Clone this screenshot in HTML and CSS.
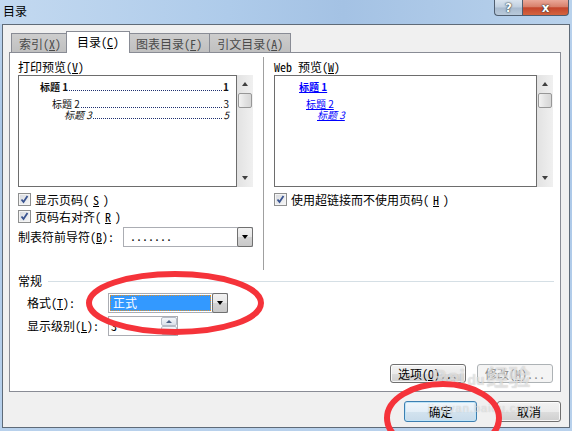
FILE: index.html
```html
<!DOCTYPE html>
<html lang="zh-CN">
<head>
  <meta charset="UTF-8">
  <title>目录</title>
  <link rel="stylesheet" href="styles.css">
</head>
<body>
  <div class="titlebar">
    <span class="title">目录</span>
    <div class="caption-buttons">
      <div class="cap-btn help">?</div>
      <div class="cap-btn close">x</div>
    </div>
  </div>

  <div class="window">
    <div class="tabs">
      <div class="tab">索引(<u>X</u>)</div>
      <div class="tab active">目录(<u>C</u>)</div>
      <div class="tab">图表目录(<u>F</u>)</div>
      <div class="tab">引文目录(<u>A</u>)</div>
    </div>

    <div class="panel">
      <div class="top">
        <div class="col col-print">
          <div class="label">打印预览(<u>V</u>)</div>
          <div class="preview-wrap">
            <div class="preview">
              <div class="toc toc1"><span>标题 1</span><span class="leader"></span><span>1</span></div>
              <div class="toc toc2"><span>标题 2</span><span class="leader"></span><span>3</span></div>
              <div class="toc toc3"><span>标题 3</span><span class="leader"></span><span>5</span></div>
            </div>
            <div class="scrollbar">
              <span class="arrow up"></span>
              <span class="thumb"></span>
              <span class="arrow down"></span>
            </div>
          </div>
          <div class="check first">
            <span class="cb"><svg width="11" height="11" viewBox="0 0 11 11"><path d="M2.5 5.5 L4.5 8 L8.5 2" fill="none" stroke="#3a5490" stroke-width="1.8"/></svg></span>
            显示页码(<u>S</u>)
          </div>
          <div class="check">
            <span class="cb"><svg width="11" height="11" viewBox="0 0 11 11"><path d="M2.5 5.5 L4.5 8 L8.5 2" fill="none" stroke="#3a5490" stroke-width="1.8"/></svg></span>
            页码右对齐(<u>R</u>)
          </div>
          <div class="field-row">
            <span class="field-label">制表符前导符(<u>B</u>):</span>
            <div class="combo combo-leader">
              <span class="combo-value">.......</span>
              <span class="combo-btn"><i class="tri"></i></span>
            </div>
          </div>
        </div>

        <div class="vsep"></div>

        <div class="col col-web">
          <div class="label">Web 预览(<u>W</u>)</div>
          <div class="preview-wrap">
            <div class="preview web">
              <a class="link link1">标题 1</a>
              <a class="link link2">标题 2</a>
              <a class="link link3">标题 3</a>
            </div>
            <div class="scrollbar">
              <span class="arrow up"></span>
              <span class="thumb"></span>
              <span class="arrow down"></span>
            </div>
          </div>
          <div class="check first">
            <span class="cb"><svg width="11" height="11" viewBox="0 0 11 11"><path d="M2.5 5.5 L4.5 8 L8.5 2" fill="none" stroke="#3a5490" stroke-width="1.8"/></svg></span>
            使用超链接而不使用页码(<u>H</u>)
          </div>
        </div>
      </div>

      <div class="group-head"><span>常规</span><span class="hline"></span></div>
      <div class="general">
        <span>格式(<u>T</u>):</span>
        <div class="combo combo-format">
          <span class="combo-value selected">正式</span>
          <span class="combo-btn"><i class="tri"></i></span>
        </div>
        <span>显示级别(<u>L</u>):</span>
        <div class="spin">
          <span class="spin-value">3</span>
          <span class="spin-btns">
            <span class="spin-up"><i class="tri-up"></i></span>
            <span class="spin-down"></span>
          </span>
        </div>
      </div>

      <div class="panel-buttons">
        <button class="btn btn-small">选项(<u>O</u>)...</button>
        <button class="btn btn-small" disabled>修改(<u>M</u>)...</button>
      </div>
    </div>

    <div class="dialog-buttons">
      <button class="btn btn-ok">确定</button>
      <button class="btn btn-cancel">取消</button>
    </div>
  </div>

  <div class="watermark">
    <span class="wm-logo">Bai<span class="wm-paw">du</span>经验</span>
    <span class="wm-url">jingyan.baidu.com</span>
  </div>

  <svg class="marks" width="572" height="431" viewBox="0 0 572 431">
    <ellipse cx="175" cy="303" rx="86" ry="29" fill="none" stroke="#f5333a" stroke-width="6"/>
    <ellipse cx="443" cy="418" rx="56" ry="34" fill="none" stroke="#f5333a" stroke-width="6"/>
  </svg>
</body>
</html>
```

FILE: styles.css
```css
* {
  box-sizing: border-box;
}
body {
  margin: 0;
  width: 572px;
  height: 431px;
  overflow: hidden;
  position: relative;
  background: linear-gradient(to bottom, #bcd4ee, #aac7e8 30%, #b8d1ec);
  font-family: "Noto Sans Mono CJK SC", "Noto Sans CJK SC", sans-serif;
  font-size: 12px;
  line-height: 14px;
  color: #000;
}
.titlebar {
  height: 24px;
  display: flex;
  justify-content: space-between;
  align-items: flex-start;
  padding: 0 3px;
  background: linear-gradient(to right, #c3d9f0, #aecbea 40%, #a4c2e4 60%, #b9d2ec);
}
.title {
  margin-top: 4px;
}
.caption-buttons {
  display: flex;
}
.cap-btn {
  height: 16px;
  display: flex;
  align-items: center;
  justify-content: center;
  color: #fff;
  font-family: "DejaVu Sans", sans-serif;
  font-weight: bold;
  font-size: 12px;
  text-shadow: 0 0 2px #233, 0 0 1px #233;
  border: 1px solid #4f5e70;
  border-top: none;
}
.help {
  width: 28px;
  border-right: none;
  border-radius: 0 0 0 4px;
  background: linear-gradient(#d9e4ef, #c0cfdf 48%, #a8bace 52%, #b9c9da);
}
.close {
  width: 47px;
  border-radius: 0 0 4px 0;
  background: linear-gradient(#eaa899, #d8806b 45%, #c4452c 52%, #d4643f);
}

.window {
  margin: 0 2px;
  height: 404px;
  border: 1px solid #5f6b78;
  background: #f0f0f0;
  padding: 6px 8px 0 6px;
}
.tabs {
  display: flex;
  align-items: flex-end;
  height: 21px;
  padding-left: 2px;
}
.tab {
  height: 19px;
  padding: 2px 7px 0;
  line-height: 15px;
  border: 1px solid #898c95;
  border-bottom: none;
  margin-right: -1px;
  background: linear-gradient(#cdcdcd, #c0c0c0);
  color: #4a4a4a;
}
.tab.active {
  height: 22px;
  margin: 0 -2px -1px -2px;
  padding: 2px 10px 0;
  background: #fff;
  color: #000;
  position: relative;
  z-index: 1;
}

.panel {
  height: 340px;
  border: 1px solid #898c95;
  background: #fff;
  display: flex;
  flex-direction: column;
  padding: 0 7px 8px 8px;
}
.top {
  display: flex;
  height: 217px;
}
.col {
  padding-top: 7px;
}
.col-print {
  width: 235px;
}
.col-web {
  flex: 1;
}
.vsep {
  width: 1px;
  margin: 4px 10px 0;
  background: #a0a0a0;
}
.label {
  height: 14px;
}
.preview-wrap {
  display: flex;
  height: 112px;
  margin-top: 1px;
}
.preview {
  flex: 1;
  border: 1px solid #6d6d6d;
  background: #fff;
  padding: 6px 7px 0 0;
}
.scrollbar {
  width: 16px;
  display: flex;
  flex-direction: column;
  align-items: center;
  padding: 7px 0 7px;
  background: linear-gradient(to right, #e2e2e2, #f0f0f0);
}
.arrow {
  width: 0;
  height: 0;
  border-left: 3.5px solid transparent;
  border-right: 3.5px solid transparent;
}
.arrow.up {
  border-bottom: 4px solid #404040;
}
.arrow.down {
  margin-top: auto;
  border-top: 4px solid #404040;
}
.thumb {
  width: 14px;
  height: 15px;
  margin-top: 7px;
  border: 1px solid #979797;
  border-radius: 2px;
  background: linear-gradient(to right, #f3f3f3, #e2e2e2 50%, #d6d6d6);
}

.toc {
  display: flex;
  align-items: baseline;
  font-family: "Noto Sans CJK SC", sans-serif;
  font-size: 10px;
  line-height: 10px;
  color: #111;
}
.toc .leader {
  flex: 1;
  margin: 0 1px;
  border-bottom: 1px dotted #1d2f70;
}
.toc1 {
  margin-left: 21px;
  font-weight: bold;
}
.toc2 {
  margin-left: 33px;
  margin-top: 7px;
}
.toc3 {
  margin-left: 45px;
  margin-top: 1px;
  font-style: italic;
}
.link {
  display: table;
  font-family: "Noto Sans CJK SC", sans-serif;
  font-size: 10px;
  line-height: 10px;
  color: #0000ff;
  text-decoration: underline;
}
.link1 {
  margin-left: 24px;
  font-weight: bold;
}
.link2 {
  margin-left: 31px;
  margin-top: 7px;
}
.link3 {
  margin-left: 42px;
  margin-top: 1px;
  font-style: italic;
}

.check {
  display: flex;
  align-items: center;
  gap: 4px;
  height: 17px;
}
.check.first {
  margin-top: 4px;
}
.cb {
  width: 13px;
  height: 13px;
  border: 1px solid #8e8f8f;
  background: linear-gradient(135deg, #d6d9de, #f7f7f7);
  box-shadow: inset 0 0 0 1px #f4f4f4;
}
.cb svg {
  display: block;
}
.field-row {
  display: flex;
  align-items: center;
  margin-top: 2px;
}
.field-label {
  width: 105px;
}
.combo {
  display: flex;
  height: 20px;
  border: 1px solid #abadb3;
  background: #fff;
}
.combo-leader {
  width: 130px;
}
.combo-value {
  flex: 1;
  padding-left: 6px;
  line-height: 16px;
}
.combo-btn {
  width: 16px;
  margin: -1px -1px -1px 0;
  border: 1px solid #707070;
  border-radius: 2px;
  background: linear-gradient(#f2f2f2, #e6e6e6 50%, #d3d3d3 51%, #c9c9c9);
  display: flex;
  align-items: center;
  justify-content: center;
}
.tri {
  width: 0;
  height: 0;
  border-left: 3.5px solid transparent;
  border-right: 3.5px solid transparent;
  border-top: 4px solid #000;
}

.group-head {
  display: flex;
  align-items: center;
  gap: 6px;
  margin-top: 4px;
  margin-right: -1px;
}
.hline {
  flex: 1;
  height: 1px;
  background: #d5dfe5;
}
.general {
  display: grid;
  grid-template-columns: 81px auto;
  grid-auto-rows: 20px;
  row-gap: 3px;
  align-items: center;
  justify-items: start;
  margin-top: 5px;
  padding-left: 9px;
}
.combo-format {
  width: 120px;
}
.combo-value.selected {
  margin: 1px;
  padding-left: 3px;
  background: #3399ff;
  color: #fff;
  outline: 1px dotted #e0902a;
  outline-offset: -1px;
}
.spin {
  display: flex;
  width: 70px;
  height: 20px;
  border: 1px solid #abadb3;
  background: #fff;
}
.spin-value {
  flex: 1;
  padding-left: 2px;
  line-height: 18px;
}
.spin-btns {
  width: 16px;
  display: flex;
  flex-direction: column;
}
.spin-up,
.spin-down {
  flex: 1;
  border: 1px solid #b5bcc7;
  border-radius: 2px;
  background: linear-gradient(#f4f7fb, #dbe2ea);
  display: flex;
  align-items: center;
  justify-content: center;
}
.tri-up {
  width: 0;
  height: 0;
  border-left: 3px solid transparent;
  border-right: 3px solid transparent;
  border-bottom: 3px solid #4d6185;
}

.panel-buttons {
  margin-top: auto;
  display: flex;
  justify-content: flex-end;
  gap: 11px;
}
.btn {
  height: 19px;
  padding: 0;
  font: inherit;
  line-height: 14px;
  color: #000;
  border: 1px solid #707070;
  border-radius: 3px;
  background: linear-gradient(#f2f2f2, #ebebeb 50%, #dddddd 51%, #cfcfcf);
  box-shadow: inset 0 0 0 1px rgba(255, 255, 255, 0.8);
}
.btn-small {
  width: 76px;
}
.btn:disabled {
  color: #8a8a8a;
  border-color: #adb2b5;
  background: #f4f4f4;
  box-shadow: none;
}
.dialog-buttons {
  display: flex;
  justify-content: flex-end;
  gap: 20px;
  margin-top: 9px;
}
.btn-ok,
.btn-cancel {
  height: 21px;
}
.btn-ok {
  width: 73px;
  border-color: #3c7fb1;
  box-shadow: inset 0 0 0 1px #bfe4f8;
  background: linear-gradient(#f0f6fb, #e3eef7 50%, #d3e3ef 51%, #c8dbea);
}
.btn-cancel {
  width: 64px;
}

/* faint site watermark over the buttons */
.watermark {
  position: absolute;
  left: 428px;
  top: 366px;
  display: flex;
  flex-direction: column;
  align-items: center;
  pointer-events: none;
  font-family: "Liberation Sans", sans-serif;
  color: rgba(255, 255, 255, 0.55);
  text-shadow: 0 0 1px rgba(110, 110, 110, 0.45);
}
.wm-logo {
  font-size: 22px;
  line-height: 24px;
  font-weight: bold;
  font-family: "Liberation Sans", "Noto Sans CJK SC", sans-serif;
}
.wm-paw {
  font-size: 14px;
  margin: 0 2px;
}
.wm-url {
  margin-top: 10px;
  font-size: 11px;
  line-height: 12px;
  letter-spacing: 1px;
}

.marks {
  position: absolute;
  left: 0;
  top: 0;
  pointer-events: none;
}
```
